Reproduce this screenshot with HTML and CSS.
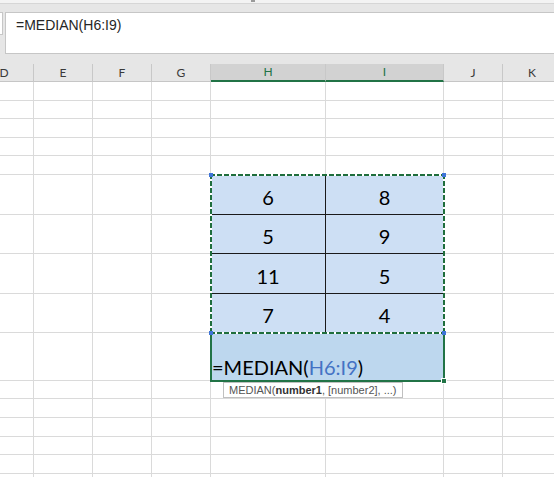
FILE: index.html
```html
<!DOCTYPE html>
<html lang="en">
<head>
<meta charset="utf-8">
<title>MEDIAN</title>
<link rel="stylesheet" href="styles.css">
</head>
<body>
<div class="chrome">
  <div class="topstrip"><span class="grip"></span></div>
  <div class="fbar">
    <div class="namebox"></div>
    <div class="formula">=MEDIAN(H6:I9)</div>
  </div>
</div>
<div class="sheet">
  <div class="grid">
    <div class="hd">D</div><div class="hd">E</div><div class="hd">F</div><div class="hd">G</div><div class="hd sel">H</div><div class="hd sel">I</div><div class="hd">J</div><div class="hd">K</div>

    <div class="c"></div><div class="c"></div><div class="c"></div><div class="c"></div><div class="c"></div><div class="c"></div><div class="c"></div><div class="c"></div>
    <div class="c"></div><div class="c"></div><div class="c"></div><div class="c"></div><div class="c"></div><div class="c"></div><div class="c"></div><div class="c"></div>
    <div class="c"></div><div class="c"></div><div class="c"></div><div class="c"></div><div class="c"></div><div class="c"></div><div class="c"></div><div class="c"></div>
    <div class="c"></div><div class="c"></div><div class="c"></div><div class="c"></div><div class="c"></div><div class="c"></div><div class="c"></div><div class="c"></div>
    <div class="c"></div><div class="c"></div><div class="c"></div><div class="c"></div><div class="c"></div><div class="c"></div><div class="c"></div><div class="c"></div>

    <div class="c"></div><div class="c"></div><div class="c"></div><div class="c"></div>
    <div class="block">
      <div class="v">6</div><div class="v">8</div>
      <div class="v">5</div><div class="v">9</div>
      <div class="v">11</div><div class="v">5</div>
      <div class="v">7</div><div class="v">4</div>
      <span class="h tl"></span><span class="h tr"></span><span class="h bl"></span><span class="h br"></span>
    </div>
    <div class="c"></div><div class="c"></div>
    <div class="c"></div><div class="c"></div><div class="c"></div><div class="c"></div><div class="c"></div><div class="c"></div>
    <div class="c"></div><div class="c"></div><div class="c"></div><div class="c"></div><div class="c"></div><div class="c"></div>
    <div class="c"></div><div class="c"></div><div class="c"></div><div class="c"></div><div class="c"></div><div class="c"></div>

    <div class="c"></div><div class="c"></div><div class="c"></div><div class="c"></div>
    <div class="fcell">
      <span class="ftext">=MEDIAN(<span class="ref">H6:I9</span>)</span>
      <span class="fill"></span>
      <div class="tip">MEDIAN(<b>number1</b>, [number2], ...)</div>
    </div>
    <div class="c"></div><div class="c"></div>

    <div class="c"></div><div class="c"></div><div class="c"></div><div class="c"></div><div class="c"></div><div class="c"></div><div class="c"></div><div class="c"></div>
    <div class="c"></div><div class="c"></div><div class="c"></div><div class="c"></div><div class="c"></div><div class="c"></div><div class="c"></div><div class="c"></div>
    <div class="c"></div><div class="c"></div><div class="c"></div><div class="c"></div><div class="c"></div><div class="c"></div><div class="c"></div><div class="c"></div>
    <div class="c"></div><div class="c"></div><div class="c"></div><div class="c"></div><div class="c"></div><div class="c"></div><div class="c"></div><div class="c"></div>
    <div class="c"></div><div class="c"></div><div class="c"></div><div class="c"></div><div class="c"></div><div class="c"></div><div class="c"></div><div class="c"></div>
    <div class="c"></div><div class="c"></div><div class="c"></div><div class="c"></div><div class="c"></div><div class="c"></div><div class="c"></div><div class="c"></div>
  </div>
</div>
</body>
</html>
```

FILE: styles.css
```css
* { box-sizing: border-box; }
html, body { margin: 0; padding: 0; }
body {
  width: 554px;
  height: 477px;
  overflow: hidden;
  background: #fff;
  font-family: "Liberation Sans", Arial, sans-serif;
}

/* top chrome + formula bar */
.chrome { height: 64px; background: #e6e6e6; }
.topstrip {
  height: 4px;
  background: #f3f3f3;
  border-bottom: 1px solid #d6d6d6;
  display: flex;
}
.grip { width: 4px; height: 2px; background: #9a9a9a; margin-left: 251px; }
.fbar { display: flex; align-items: flex-start; margin-top: 8px; height: 42px; }
.namebox {
  width: 3px;
  height: 23px;
  background: #fff;
  border: 1px solid #c6c6c6;
  border-left: 0;
}
.formula {
  flex: 1;
  height: 42px;
  margin-left: 2px;
  background: #fff;
  border: 1px solid #c6c6c6;
  border-right: 0;
  padding: 4px 0 0 10px;
  font-size: 14px;
  color: #262626;
}

/* sheet grid */
.sheet { height: 413px; overflow: hidden; }
.grid {
  display: grid;
  width: 587px;
  margin-left: -25px;
  grid-template-columns: 59px 59px 59px 59px 115px 118px 59px 59px;
  grid-template-rows: 18px repeat(5, 18.6px) repeat(4, 39.6px) 47.4px repeat(6, 18.6px);
}
.c { border-right: 1px solid #dadada; border-bottom: 1px solid #dadada; }
.hd {
  background: #e6e6e6;
  border-right: 1px solid #c8c8c8;
  border-bottom: 1px solid #c6c6c6;
  font: 12px/17px Lato, sans-serif;
  color: #3a3a3a;
  text-align: center;
}
.hd.sel {
  background: #d2d2d2;
  color: #217346;
  border-bottom: 2px solid #217346;
  line-height: 16px;
}

/* data block H6:I9 */
.block {
  grid-column: 5 / 7;
  grid-row: 7 / 11;
  position: relative;
  z-index: 2;
  display: grid;
  grid-template-columns: 115px 118px;
  grid-template-rows: repeat(4, 1fr);
}
.v {
  background: #cddff4;
  border-right: 1px solid #1a1a1a;
  border-bottom: 1px solid #1a1a1a;
  display: flex;
  align-items: flex-end;
  justify-content: center;
  padding-bottom: 5px;
  font: 20px/1.2 Lato, sans-serif;
  color: #000;
}
.block::after {
  content: "";
  position: absolute;
  inset: -1px;
  background:
    repeating-linear-gradient(90deg, #1f6e3c 0 5px, #fff 5px 7px) top left / 100% 2px no-repeat,
    repeating-linear-gradient(90deg, #1f6e3c 0 5px, #fff 5px 7px) bottom left / 100% 2px no-repeat,
    repeating-linear-gradient(180deg, #1f6e3c 0 5px, #fff 5px 7px) top left / 2px 100% no-repeat,
    repeating-linear-gradient(180deg, #1f6e3c 0 5px, #fff 5px 7px) top right / 2px 100% no-repeat;
}
.h { position: absolute; width: 4px; height: 4px; background: #3e74d8; z-index: 3; }
.tl { left: -2px; top: -2px; }
.tr { right: -2px; top: -2px; }
.bl { left: -2px; bottom: -2px; }
.br { right: -2px; bottom: -2px; }

/* formula cell H10:I10 */
.fcell {
  grid-column: span 2;
  position: relative;
  background: #bdd7ee;
  display: flex;
  align-items: flex-end;
  padding: 0 0 1.5px 1px;
}
.ftext {
  font: 20px/1.2 Lato, sans-serif;
  color: #000;
  white-space: nowrap;
}
.fcell::before {
  content: "";
  position: absolute;
  inset: -1px;
  border: 2px solid #217346;
}
.ref { color: #4472c4; }
.fill {
  position: absolute;
  right: -3px;
  bottom: -3px;
  width: 6px;
  height: 6px;
  background: #217346;
  border: 1px solid #fff;
}
.tip {
  position: absolute;
  left: 12px;
  top: calc(100% + 1px);
  z-index: 3;
  background: #fff;
  border: 1px solid #c0c0c0;
  padding: 0 5px;
  font: 11px/14px "Liberation Sans", Arial, sans-serif;
  color: #555;
  white-space: nowrap;
}
.tip b { color: #333; }
```
